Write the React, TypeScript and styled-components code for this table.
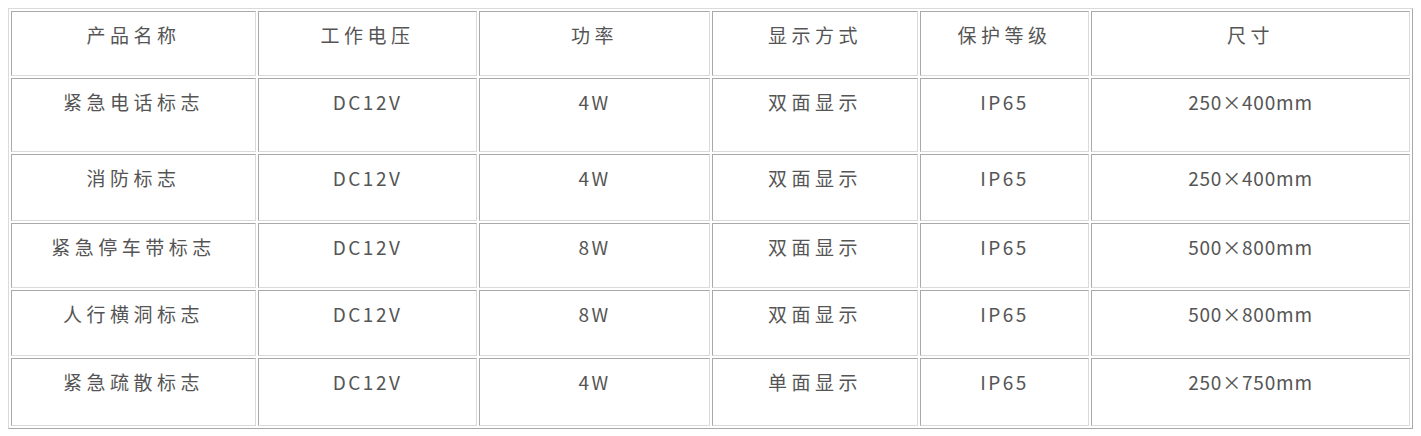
import styled, { createGlobalStyle } from 'styled-components';

const GlobalStyle = createGlobalStyle`
  body {
    margin: 8px;
    background: #ffffff;
    font-family: "Noto Sans CJK SC", "Noto Sans", sans-serif;
  }
`;

const Table = styled.table`
  width: 1405px;
  table-layout: fixed;
  border-collapse: separate;
  border-spacing: 2px;
  border: 1px solid;
  border-color: #dadada #a9a9a9 #a9a9a9 #dadada;
  color: #555555;
`;

const Row = styled.tr<{ $h: number }>`
  height: ${(p) => p.$h}px;
`;

type Kind = 'cjk' | 'latin' | 'size';

const spacing: Record<Kind, string> = {
  cjk: '4.5px',
  latin: '2.5px',
  size: '0.8px',
};

const Cell = styled.td<{ $kind: Kind }>`
  box-sizing: border-box;
  border: 1px solid;
  border-color: #a9a9a9 #dadada #dadada #a9a9a9;
  padding: 11px 0 0;
  vertical-align: top;
  text-align: center;
  font-size: 19px;
  line-height: 24px;
  letter-spacing: ${(p) => spacing[p.$kind]};
`;

const widths = [245, 219, 231, 206, 169, 319];

const header = ['产品名称', '工作电压', '功率', '显示方式', '保护等级', '尺寸'];

const rows: { h: number; cells: string[] }[] = [
  { h: 74, cells: ['紧急电话标志', 'DC12V', '4W', '双面显示', 'IP65', '250×400mm'] },
  { h: 67, cells: ['消防标志', 'DC12V', '4W', '双面显示', 'IP65', '250×400mm'] },
  { h: 65, cells: ['紧急停车带标志', 'DC12V', '8W', '双面显示', 'IP65', '500×800mm'] },
  { h: 66, cells: ['人行横洞标志', 'DC12V', '8W', '双面显示', 'IP65', '500×800mm'] },
  { h: 68, cells: ['紧急疏散标志', 'DC12V', '4W', '单面显示', 'IP65', '250×750mm'] },
];

const kindOf = (t: string): Kind => {
  if (t.includes('×')) return 'size';
  if (/[\u4e00-\u9fff]/.test(t)) return 'cjk';
  return 'latin';
};

export default function App() {
  return (
    <>
      <GlobalStyle />
      <Table>
        <colgroup>
          {widths.map((w, i) => (
            <col key={i} style={{ width: w }} />
          ))}
        </colgroup>
        <tbody>
          <Row $h={65}>
            {header.map((t) => (
              <Cell key={t} $kind="cjk">
                {t}
              </Cell>
            ))}
          </Row>
          {rows.map((r, i) => (
            <Row key={i} $h={r.h}>
              {r.cells.map((t, j) => (
                <Cell key={j} $kind={kindOf(t)}>
                  {t}
                </Cell>
              ))}
            </Row>
          ))}
        </tbody>
      </Table>
    </>
  );
}
